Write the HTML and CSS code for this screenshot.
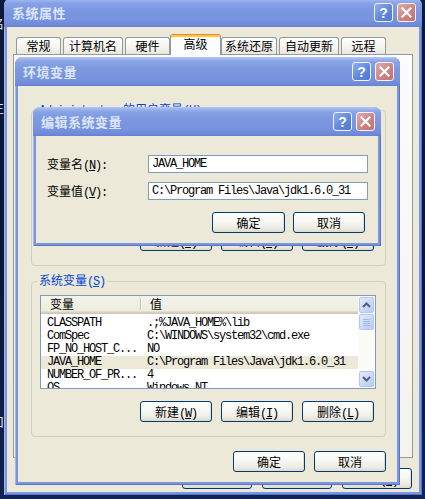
FILE: index.html
```html
<!DOCTYPE html>
<html>
<head>
<meta charset="utf-8">
<link rel="stylesheet" href="styles.css">
</head>
<body>
<div class="desktop">
  <span class="dg dg1">名</span>
  <span class="dg dg2">王</span>
  <span class="dg dg3">#</span>
  <span class="dg dg4">口</span>

  <div class="win outer">
    <div class="titlebar">
      <span class="title">系统属性</span>
      <div class="tbtns">
        <span class="tb help">?</span>
        <span class="tb close"><svg width="11" height="11" viewBox="0 0 11 11"><path d="M1.5 1.5L9.5 9.5M9.5 1.5L1.5 9.5" stroke="#fff" stroke-width="2.2" stroke-linecap="square"/></svg></span>
      </div>
    </div>
    <div class="body">
      <div class="tabs">
        <span class="tab">常规</span>
        <span class="tab">计算机名</span>
        <span class="tab">硬件</span>
        <span class="tab sel">高级</span>
        <span class="tab narrow">系统还原</span>
        <span class="tab">自动更新</span>
        <span class="tab">远程</span>
      </div>
      <div class="panel"></div>
      <div class="btnrow outer-btns">
        <button class="btn w70">确定</button>
        <button class="btn w70">取消</button>
        <button class="btn w70">应用<span class="lat">(<u>A</u>)</span></button>
      </div>
    </div>
  </div>

  <div class="win env">
    <div class="titlebar">
      <span class="title">环境变量</span>
      <div class="tbtns">
        <span class="tb help">?</span>
        <span class="tb close"><svg width="11" height="11" viewBox="0 0 11 11"><path d="M1.5 1.5L9.5 9.5M9.5 1.5L1.5 9.5" stroke="#fff" stroke-width="2.2" stroke-linecap="square"/></svg></span>
      </div>
    </div>
    <div class="body env-body">
      <fieldset class="group user">
        <legend><span class="lat">Administrator </span>的用户变量<span class="lat">(<u>U</u>)</span></legend>
        <div class="list">
          <div class="list-main">
            <div class="lhead"><span class="lh c1">变量</span><span class="sep"></span><span class="lh c2">值</span></div>
            <div class="rows">
              <div class="row"><span class="c1">TEMP</span><span class="c2">%USERPROFILE%\Local Settings\Temp</span></div>
              <div class="row"><span class="c1">TMP</span><span class="c2">%USERPROFILE%\Local Settings\Temp</span></div>
            </div>
          </div>
        </div>
        <div class="btnrow grp-btns">
          <button class="btn">新建<span class="lat">(<u>N</u>)</span></button>
          <button class="btn">编辑<span class="lat">(<u>E</u>)</span></button>
          <button class="btn">删除<span class="lat">(<u>D</u>)</span></button>
        </div>
      </fieldset>

      <fieldset class="group sys">
        <legend>系统变量<span class="lat">(<u>S</u>)</span></legend>
        <div class="list">
          <div class="list-main">
            <div class="lhead"><span class="lh c1">变量</span><span class="sep"></span><span class="lh c2">值</span></div>
            <div class="rows">
              <div class="row"><span class="c1">CLASSPATH</span><span class="c2">.;%JAVA_HOME%\lib</span></div>
              <div class="row"><span class="c1">ComSpec</span><span class="c2">C:\WINDOWS\system32\cmd.exe</span></div>
              <div class="row"><span class="c1">FP_NO_HOST_C...</span><span class="c2">NO</span></div>
              <div class="row sel"><span class="c1">JAVA_HOME</span><span class="c2">C:\Program Files\Java\jdk1.6.0_31</span></div>
              <div class="row"><span class="c1">NUMBER_OF_PR...</span><span class="c2">4</span></div>
              <div class="row"><span class="c1">OS</span><span class="c2">Windows_NT</span></div>
            </div>
          </div>
          <div class="sbar">
            <span class="sb"><svg width="9" height="6" viewBox="0 0 9 6"><path d="M1 5L4.5 1.5L8 5" stroke="#4d6185" stroke-width="2" fill="none"/></svg></span>
            <span class="sb thumb"><svg width="7" height="8" viewBox="0 0 7 8"><path d="M0 1.5H7M0 3.5H7M0 5.5H7M0 7.5H7" stroke="#a3b7ea" stroke-width="1"/></svg></span>
            <span class="track"></span>
            <span class="sb"><svg width="9" height="6" viewBox="0 0 9 6"><path d="M1 1L4.5 4.5L8 1" stroke="#4d6185" stroke-width="2" fill="none"/></svg></span>
          </div>
        </div>
        <div class="btnrow grp-btns">
          <button class="btn">新建<span class="lat">(<u>W</u>)</span></button>
          <button class="btn">编辑<span class="lat">(<u>I</u>)</span></button>
          <button class="btn">删除<span class="lat">(<u>L</u>)</span></button>
        </div>
      </fieldset>

      <div class="btnrow env-btns">
        <button class="btn">确定</button>
        <button class="btn">取消</button>
      </div>
    </div>
  </div>

  <div class="win edit">
    <div class="titlebar">
      <span class="title">编辑系统变量</span>
      <div class="tbtns">
        <span class="tb help">?</span>
        <span class="tb close"><svg width="11" height="11" viewBox="0 0 11 11"><path d="M1.5 1.5L9.5 9.5M9.5 1.5L1.5 9.5" stroke="#fff" stroke-width="2.2" stroke-linecap="square"/></svg></span>
      </div>
    </div>
    <div class="body edit-body">
      <div class="frow"><span class="flabel">变量名<span class="lat">(<u>N</u>):</span></span><input class="field" value="JAVA_HOME" readonly></div>
      <div class="frow"><span class="flabel">变量值<span class="lat">(<u>V</u>):</span></span><input class="field" value="C:\Program Files\Java\jdk1.6.0_31" readonly></div>
      <div class="btnrow edit-btns">
        <button class="btn w73">确定</button>
        <button class="btn">取消</button>
      </div>
    </div>
  </div>
</div>
</body>
</html>
```

FILE: styles.css
```css
* { box-sizing: border-box; }
html, body { margin: 0; padding: 0; }
body {
  width: 425px; height: 499px; overflow: hidden;
  font-family: "Noto Sans CJK SC", "Noto Sans", sans-serif;
  font-size: 12px; color: #000;
}
.desktop {
  position: relative; width: 425px; height: 499px; overflow: hidden;
  background: linear-gradient(180deg, #0c1a3c 0%, #0a1634 50%, #0f2352 100%);
}
.dg { position: absolute; left: -8px; color: #e6ecf6; font-size: 12px; line-height: 12px; }
.dg1 { top: 18px; }
.dg2 { top: 103px; }
.dg3 { top: 337px; }
.dg4 { top: 416px; }

.lat { font-family: "Liberation Mono", monospace; letter-spacing: -1.2px; }

/* windows */
.win {
  position: absolute; display: flex; flex-direction: column;
  padding: 0 3px 3px; background: #7b96e0; border-radius: 8px 8px 0 0;
  box-shadow: inset 1px 0 #a3b6ec, inset -1px 0 #5a73c9, inset 0 -1px #5a73c9;
}
.outer { left: 4px; top: -2px; width: 418px; }
.env { left: 15px; top: 57px; width: 385px; }
.edit { left: 33px; top: 107px; width: 348px; }

.titlebar {
  display: flex; align-items: center; height: 29px; margin: 0 -3px;
  padding: 0 6px 0 8px; border-radius: 7px 7px 0 0;
  background: linear-gradient(180deg, #b9caf3 0, #9db4ed 2px, #87a2e6 5px, #7c98e1 12px, #7893df 22px, #6e8ad8 27px, #6580d0 29px);
}
.title { flex: 1; color: #dbe5f9; font-weight: bold; font-size: 13px; letter-spacing: .5px; }
.tbtns { display: flex; gap: 4px; }
.tb {
  width: 19px; height: 19px; border: 1px solid #f0f4fd; border-radius: 3px;
  display: flex; align-items: center; justify-content: center;
}
.tb.help {
  background: linear-gradient(135deg, #92adf0, #6188de 55%, #5178d4);
  color: #fff; font: bold 14px/1 "Liberation Sans", sans-serif;
}
.tb.close { background: linear-gradient(135deg, #e6abab, #d08282 55%, #c3706f); }

.body { background: #ece9d8; display: flex; flex-direction: column; }

/* tabs */
.tabs {
  display: flex; align-items: flex-end; gap: 2px; height: 21px;
  margin-top: 7px; padding-left: 9px; position: relative; z-index: 1;
}
.tab {
  min-width: 45px; height: 17px; margin-bottom: 1px; padding: 0 5px;
  border: 1px solid #919b9c; border-bottom: 0; border-radius: 3px 3px 0 0;
  background: linear-gradient(#fefefe, #f4f3ee 60%, #e9e7df);
  text-align: center; line-height: 16px; white-space: nowrap;
}
.tab.narrow { padding: 0 3px; }
.tab.sel {
  min-width: 51px; height: 21px; margin: 0 -2px; background: #fcfcfe;
  border-top: 1px solid #e68b2c; box-shadow: inset 0 2px #ffc73c;
  line-height: 18px;
}
.panel {
  height: 404px; margin: -1px 6px 0; border: 1px solid #919b9c;
  background: linear-gradient(#fcfcfe, #f4f3ee);
}

/* buttons */
.btnrow { display: flex; justify-content: flex-end; gap: 9px; }
.btn {
  width: 72px; height: 21px; padding: 0; border: 1px solid #003c74; border-radius: 3px;
  background: linear-gradient(180deg, #ffffff 0, #f7f7f3 45%, #eeece4 80%, #dcd8ca 100%);
  box-shadow: inset -1px -1px #e0dccf;
  font: 12px/19px "Noto Sans CJK SC", sans-serif; color: #000; white-space: nowrap;
}
.btn.w70 { width: 70px; }
.btn.w73 { width: 73px; }
.outer-btns { gap: 10px; margin-top: 10px; padding: 0 7px 3px 0; }

/* env body */
.env-body { padding: 15px 11px 10px 13px; }
.group {
  margin: 0; padding: 5px 9px 14px 8px; min-width: 0;
  border: 1px solid #d0d0bf; border-radius: 4px;
}
.group legend { padding: 0 2px; margin-left: -3px; line-height: 16px; color: #0046d5; }
.group.sys { margin-top: 6px; }
.grp-btns { margin-top: 12px; padding-right: 2px; }
.env-btns { margin-top: 14px; }

/* list view */
.list { display: flex; height: 94px; border: 1px solid #7f9db9; background: #fff; overflow: hidden; }
.list-main { flex: 1; min-width: 0; display: flex; flex-direction: column; }
.lhead {
  display: flex; align-items: center; height: 18px; flex: none;
  background: linear-gradient(#f5f4ec, #ebeadb);
  box-shadow: inset 0 -1px #cbc7b8, inset 0 -2px #d6d2c2, inset 0 -3px #e2decd;
}
.lh { line-height: 16px; padding-bottom: 2px; }
.lh.c1 { width: 99px; padding-left: 9px; }
.lh.c2 { padding-left: 8px; }
.sep { width: 2px; height: 12px; margin-bottom: 2px; border-left: 1px solid #c7c3b3; border-right: 1px solid #fff; }
.rows { padding-top: 3px; }
.row {
  display: flex; height: 13px; white-space: nowrap;
  font: 12px/13px "Liberation Mono", monospace; letter-spacing: -1.2px;
}
.row .c1 { width: 99px; padding-left: 6px; overflow: hidden; flex: none; }
.row .c2 { padding-left: 7px; }
.row.sel { background: #ece9d8; }

.sbar { width: 17px; flex: none; display: flex; flex-direction: column; padding: 1px; background: #fbfbf8; }
.sb {
  height: 16px; flex: none; display: flex; align-items: center; justify-content: center;
  border: 1px solid #b4c7f0; border-radius: 2px;
  background: linear-gradient(135deg, #e4ecfd, #c8d7f8 60%, #b9cbf3);
}
.thumb { margin-top: 1px; }
.track { flex: 1; }

/* edit dialog */
.edit-body { padding: 19px 10px 10px 11px; }
.frow { display: flex; align-items: center; height: 18px; }
.frow + .frow { margin-top: 9px; }
.flabel { width: 101px; flex: none; }
.field {
  flex: 1; min-width: 0; height: 18px; margin: 0; padding: 0 3px;
  border: 1px solid #7f9db9; background: #fff; outline: none;
  font: 12px/16px "Liberation Mono", monospace; letter-spacing: -1.2px; color: #000;
}
.edit-btns { margin-top: 12px; padding-right: 3px; gap: 8px; }
```
